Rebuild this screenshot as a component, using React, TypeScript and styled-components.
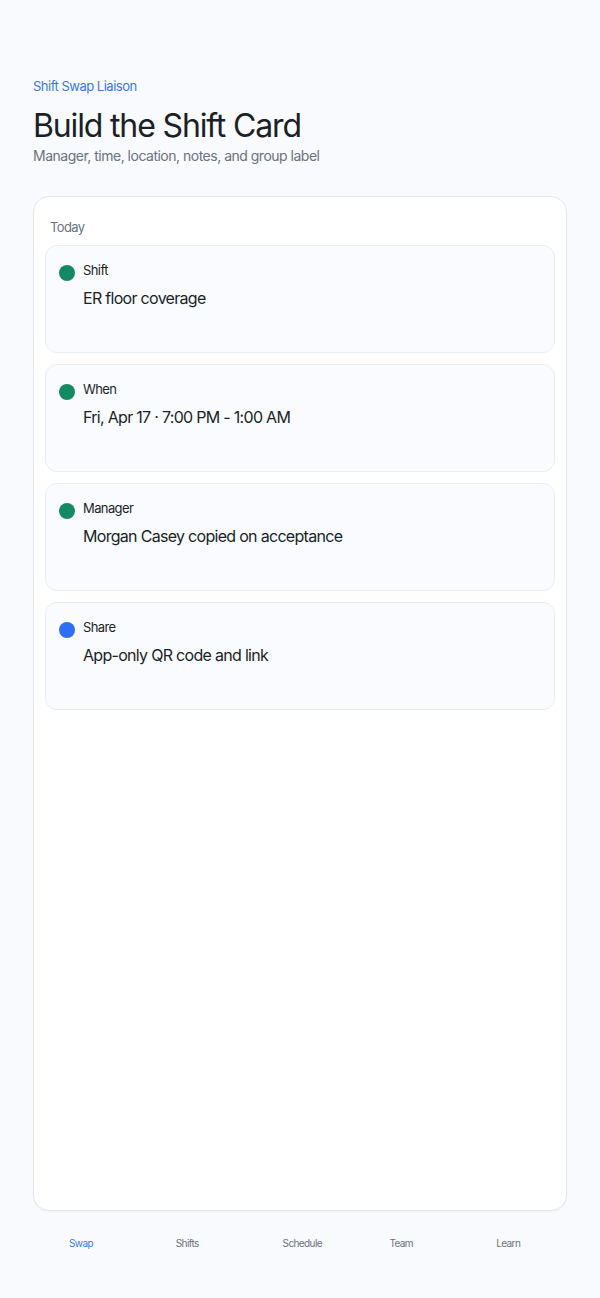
import React from 'react'
import styled, { createGlobalStyle } from 'styled-components'

const GlobalStyle = createGlobalStyle`
  html, body {
    margin: 0;
    padding: 0;
    background: #f8fafd;
  }
  body {
    font-family: Inter, "Noto Sans", "Liberation Sans", sans-serif;
    color: #1b1f26;
  }
`

const Page = styled.div`
  display: flex;
  flex-direction: column;
  min-height: 100vh;
  box-sizing: border-box;
  padding: 78px 33px 0;
`
const Eyebrow = styled.div`
  font-size: 13px;
  line-height: 16px;
  letter-spacing: -0.5px;
  color: #3b78e7;
`
const Title = styled.h1`
  margin: 12px 0 0;
  font-size: 32px;
  line-height: 40px;
  font-weight: 400;
  letter-spacing: -1.15px;
  color: #1b1f26;
`
const Subtitle = styled.p`
  margin: 0;
  font-size: 14px;
  line-height: 20px;
  letter-spacing: -0.5px;
  color: #6b7280;
`
const Card = styled.section`
  flex: 1;
  margin-top: 30px;
  display: flex;
  flex-direction: column;
  gap: 11px;
  padding: 21px 11px 20px;
  background: #ffffff;
  border: 1px solid #e4e8ee;
  border-radius: 16px;
  box-shadow: 0 1px 2px rgba(20, 30, 50, 0.04);
`
const Section = styled.div`
  font-size: 13px;
  line-height: 18px;
  letter-spacing: -0.6px;
  color: #6b7280;
  padding-left: 5px;
  margin-bottom: -2px;
`
const Item = styled.div`
  display: flex;
  align-items: flex-start;
  gap: 8px;
  height: 108px;
  box-sizing: border-box;
  padding: 16px 13px 14px;
  background: #f9fbfe;
  border: 1px solid #e9eef2;
  border-radius: 12px;
`
const Dot = styled.span<{ $color: string }>`
  flex: none;
  width: 16px;
  height: 16px;
  margin-top: 3px;
  border-radius: 50%;
  background: ${(p) => p.$color};
`
const Body = styled.div`
  display: flex;
  flex-direction: column;
  gap: 9px;
`
const Label = styled.div`
  font-size: 13px;
  line-height: 16px;
  letter-spacing: -0.6px;
  color: #1b1f26;
`
const Value = styled.div`
  font-size: 16px;
  line-height: 22px;
  letter-spacing: -0.7px;
  color: #1b1f26;
`
const Nav = styled.nav`
  display: grid;
  grid-template-columns: repeat(5, 1fr);
  height: 87px;
  box-sizing: border-box;
  padding-top: 24px;
`
const NavItem = styled.span<{ $active?: boolean }>`
  padding-left: 36px;
  font-size: 10px;
  line-height: 16px;
  letter-spacing: -0.6px;
  color: ${(p) => (p.$active ? '#3b78e7' : '#6b7280')};
`

const rows = [
  { label: 'Shift', value: 'ER floor coverage', color: '#138a62' },
  { label: 'When', value: 'Fri, Apr 17 · 7:00 PM - 1:00 AM', color: '#138a62' },
  { label: 'Manager', value: 'Morgan Casey copied on acceptance', color: '#138a62' },
  { label: 'Share', value: 'App-only QR code and link', color: '#2d6ef3' },
]

const tabs = ['Swap', 'Shifts', 'Schedule', 'Team', 'Learn']

export default function App(): React.ReactElement {
  return (
    <>
      <GlobalStyle />
      <Page>
        <Eyebrow>Shift Swap Liaison</Eyebrow>
        <Title>Build the Shift Card</Title>
        <Subtitle>Manager, time, location, notes, and group label</Subtitle>

        <Card>
          <Section>Today</Section>
          {rows.map((r) => (
            <Item key={r.label}>
              <Dot $color={r.color} />
              <Body>
                <Label>{r.label}</Label>
                <Value>{r.value}</Value>
              </Body>
            </Item>
          ))}
        </Card>

        <Nav>
          {tabs.map((t, i) => (
            <NavItem key={t} $active={i === 0}>
              {t}
            </NavItem>
          ))}
        </Nav>
      </Page>
    </>
  )
}
